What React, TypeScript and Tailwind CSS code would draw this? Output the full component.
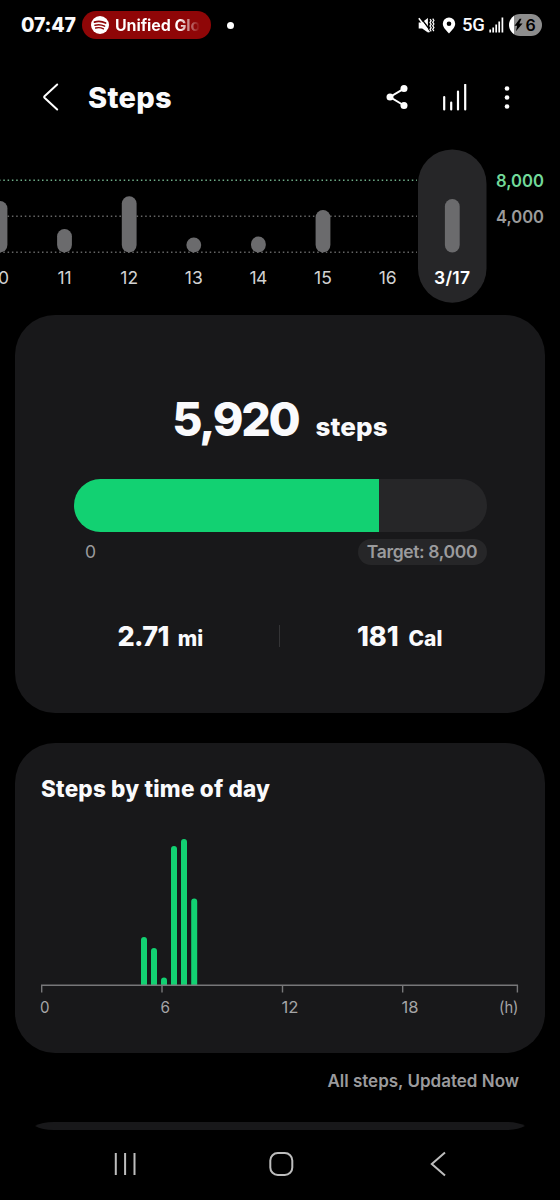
import React from "react";

const week = [
  { label: "10", x: 0, top: 201 },
  { label: "11", x: 64.5, top: 229 },
  { label: "12", x: 129.2, top: 196.3 },
  { label: "13", x: 193.8, top: 237.6 },
  { label: "14", x: 258.4, top: 236.6 },
  { label: "15", x: 323, top: 210 },
  { label: "16", x: 387.7, top: null },
];

const hourly = [
  { x: 144, top: 937 },
  { x: 154, top: 948 },
  { x: 164, top: 977.5 },
  { x: 174, top: 846 },
  { x: 184, top: 839 },
  { x: 194.2, top: 898.5 },
];

const ticks = [41.7, 162, 282.5, 402.7, 517.4];

const hourLabels = [
  { x: 40, label: "0", w: 9.5 },
  { x: 160.4, label: "6", w: 9.5 },
  { x: 281.4, label: "12", w: 17 },
  { x: 401.5, label: "18", w: 17 },
  { x: 499, label: "(h)", w: 19.5 },
];

function StatusBar() {
  return (
    <div className="flex h-[50px] shrink-0 items-center pl-[21px] pr-[18px]">
      <span className="w-[61px] pt-[2px] text-[19.5px] font-extrabold leading-none tracking-[-0.2px]">07:47</span>
      <div className="flex h-[28px] w-[129px] items-center overflow-hidden rounded-full bg-[#8f0607] pl-[9px]">
        <svg width="18" height="18" viewBox="0 0 18 18" className="shrink-0">
          <circle cx="9" cy="9" r="9" fill="#fff" />
          <g fill="none" stroke="#8f0607" strokeLinecap="round">
            <path d="M3.4 6.1c3.7-1.2 7.8-.8 11.2 1" strokeWidth="1.7" />
            <path d="M4 9.2c3.2-.9 6.6-.6 9.6 1" strokeWidth="1.5" />
            <path d="M4.6 12c2.7-.7 5.5-.4 7.9.9" strokeWidth="1.3" />
          </g>
        </svg>
        <span className="ml-[6px] w-[85px] overflow-hidden whitespace-nowrap bg-linear-to-r from-white from-75% to-transparent bg-clip-text text-[16px] font-bold leading-[22px] tracking-[-0.1px] text-transparent">
          Unified Glo
        </span>
      </div>
      <span className="ml-[16px] size-[7px] rounded-full bg-white" />
      <div className="ml-auto flex items-center">
        <svg width="17" height="17" viewBox="0 0 17 17" className="mr-[7px]">
          <path d="M.7 5.5h3.2L9.9 1v14.5L4.2 11.5H.7z" fill="#fff" />
          <path d="M2.5 .6 12 13" stroke="#000" strokeWidth="1.4" />
          <path d="M.8 1.2 11.4 15.2" stroke="#fff" strokeWidth="1.6" />
          <path d="m12 2.2 1.2 1.5-1.2 1.8 1.2 1.7L12 9l1.2 1.7-1.2 1.7 1.2 2M14.7 1.7l1.2 1.8-1.2 1.7 1.2 1.8-1.2 1.8 1.2 1.8-1.2 1.7 1.2 1.8" fill="none" stroke="#fff" strokeWidth="1.2" />
        </svg>
        <svg width="14" height="17" viewBox="0 0 14 17" className="mr-[6px]">
          <path fillRule="evenodd" d="M7 .5a6.2 6.2 0 0 0-6.2 6.2C.8 10.5 4 12.7 7 16.5c3-3.8 6.2-6 6.2-9.8A6.2 6.2 0 0 0 7 .5Zm0 3.9a2.3 2.3 0 1 1 0 4.6 2.3 2.3 0 0 1 0-4.6Z" fill="#fff" />
        </svg>
        <span className="w-[27px] whitespace-nowrap font-['Roboto'] text-[18.5px] font-medium leading-none tracking-[-0.2px]">5G</span>
        <svg width="15" height="16" viewBox="0 0 15 16" className="mr-[5px]">
          <path d="M1.2 15.5v-3M4.2 15.5v-5M7.2 15.5V7.5M10.2 15.5V4.5M13.4 15.5V.5" stroke="#fff" strokeWidth="1.7" />
        </svg>
        <div className="flex h-[22px] w-[33px] items-center overflow-hidden rounded-full bg-[linear-gradient(90deg,#fff_5px,#8d8d8d_5px)] text-black">
          <svg width="9" height="14" viewBox="0 0 9 14" className="ml-[4.5px]">
            <path d="M5.7.7.5 7.7h2.7L1.9 13.2 8.6 5.6H5.3L7.5.7z" fill="#000" />
          </svg>
          <span className="ml-[3px] text-[16px] font-semibold leading-none">6</span>
        </div>
      </div>
    </div>
  );
}

function Header() {
  return (
    <header className="flex h-[96px] shrink-0 items-center pl-[42px] pr-[50px]">
      <svg width="18" height="28" viewBox="0 0 18 28" className="mb-[2px]">
        <path d="M15.2 1.5 2.5 13.2q-.8.8 0 1.6L15.2 26.5" fill="none" stroke="#fff" strokeWidth="2" strokeLinecap="round" />
      </svg>
      <h1 className="mb-[1px] ml-[28px] text-[29px] font-extrabold leading-none tracking-[0.3px]">Steps</h1>
      <svg width="22" height="26" viewBox="0 0 22 26" className="mb-[2px] ml-auto">
        <path d="M18 4.6 4 13l14 8.5" fill="none" stroke="#fff" strokeWidth="2" />
        <circle cx="18" cy="4.5" r="3.5" fill="#fff" />
        <circle cx="4" cy="13" r="3.5" fill="#fff" />
        <circle cx="18" cy="21.5" r="3.5" fill="#fff" />
      </svg>
      <svg width="26" height="28" viewBox="0 0 26 28" className="ml-[34px]">
        <path d="M2.2 13v12.5M9.2 18.5v7M16 7.5v18M23.2.8v24.7" stroke="#fff" strokeWidth="2.2" strokeLinecap="round" />
      </svg>
      <svg width="6" height="26" viewBox="0 0 6 26" className="ml-[36px]">
        <circle cx="3" cy="3.5" r="2.3" fill="#fff" />
        <circle cx="3" cy="12.5" r="2.3" fill="#fff" />
        <circle cx="3" cy="21.5" r="2.3" fill="#fff" />
      </svg>
    </header>
  );
}

function WeekChart() {
  return (
    <svg width="560" height="169" viewBox="0 146 560 169" className="block shrink-0">
      <g strokeWidth="1.5" strokeDasharray="1.5 2.8" fill="none">
        <path d="M-1 180.2H417" stroke="#6fae89" />
        <path d="M-1 216.2H417" stroke="#656565" />
        <path d="M-1 252.2H417" stroke="#656565" />
      </g>
      {week.map((d) => (
        <g key={d.label}>
          {d.top !== null && <rect x={d.x - 7.4} y={d.top} width="14.8" height={252.4 - d.top} rx="7.3" fill="#6b6b6d" />}
          <text x={d.x} y="284.3" textAnchor="middle" fontSize="17.5" fill="#d2d2d2" textLength={d.label === "11" ? 14 : 18}>{d.label}</text>
        </g>
      ))}
      <rect x="418" y="149.5" width="68.5" height="153.2" rx="34.2" fill="#262628" />
      <rect x="444.9" y="199" width="14.8" height="53.4" rx="7.4" fill="#6b6b6d" />
      <text x="452" y="284.3" textAnchor="middle" fontSize="17.5" fontWeight="600" fill="#fff" textLength="36">3/17</text>
      <text x="496" y="186.7" fontSize="17.5" fontWeight="600" fill="#72d99a" textLength="48" lengthAdjust="spacingAndGlyphs">8,000</text>
      <text x="496" y="222.7" fontSize="17.5" fontWeight="600" fill="#9b9b9b" textLength="48" lengthAdjust="spacingAndGlyphs">4,000</text>
    </svg>
  );
}

function SummaryCard() {
  return (
    <section className="mx-[15px] flex h-[398px] shrink-0 flex-col rounded-[40px] bg-[#18181a] px-[58.5px]">
      <div className="mt-[80px] flex h-[48px] items-baseline justify-center whitespace-nowrap leading-[48px]">
        <span className="text-[46.5px] font-extrabold tracking-[-2.3px]">5,920</span>
        <span className="ml-[17px] text-[26px] font-extrabold tracking-[0.1px]">steps</span>
      </div>
      <div className="mt-[35.5px] h-[53px] overflow-hidden rounded-full bg-[#262628]">
        <div className="h-full w-[74%] bg-[#12d172]" />
      </div>
      <div className="mt-[7.5px] flex h-[26px] items-center justify-between pl-[11.5px] text-[#9b9b9d]">
        <span className="text-[17.5px]">0</span>
        <span className="flex h-[26px] w-[129px] items-center justify-center whitespace-nowrap rounded-full bg-[#262628] text-[17.5px] font-semibold tracking-[-0.35px]">Target: 8,000</span>
      </div>
      <div className="mt-[54px] flex h-[34px] items-center whitespace-nowrap leading-none">
        <div className="flex w-[205px] items-baseline pl-[44px]">
          <span className="text-[27px] font-extrabold tracking-[-0.6px]">2.71</span>
          <span className="ml-[9px] text-[21px] font-extrabold">mi</span>
        </div>
        <span className="h-[22px] w-px bg-[#343436]" />
        <div className="flex items-baseline pl-[77.5px]">
          <span className="text-[27px] font-extrabold tracking-[-0.1px]">181</span>
          <span className="ml-[10px] text-[21px] font-extrabold">Cal</span>
        </div>
      </div>
    </section>
  );
}

function TimeOfDayCard() {
  return (
    <section className="mx-[15px] mt-[30px] flex h-[310px] shrink-0 flex-col rounded-[40px] bg-[#18181a]">
      <h2 className="ml-[26px] mt-[32px] h-[28px] whitespace-nowrap text-[22.5px] font-extrabold leading-[28px] tracking-[0.2px]">Steps by time of day</h2>
      <svg width="530" height="220" viewBox="15 803 530 220" className="block">
        {hourly.map((b) => (
          <path key={b.x} d={`M${b.x - 3} 985V${b.top + 3}a3 3 0 0 1 6 0V985z`} fill="#12d172" />
        ))}
        <path d="M41 985.3H518" stroke="#777779" strokeWidth="1.4" />
        {ticks.map((x) => (
          <path key={x} d={`M${x} 985V992.5`} stroke="#777779" strokeWidth="1.4" />
        ))}
        {hourLabels.map((h) => (
          <text key={h.label} x={h.x} y="1012.8" fontSize="16" fill="#a5a5a7" textLength={h.w} lengthAdjust="spacingAndGlyphs">{h.label}</text>
        ))}
      </svg>
    </section>
  );
}

function NavBar() {
  return (
    <nav className="flex h-[70px] shrink-0 items-center pb-[2px] pl-[114px] pr-[113px]">
      <svg width="23" height="24" viewBox="0 0 23 24">
        <path d="M1.8 1v22M11.1 1v22M20.5 1v22" stroke="#bdbdbd" strokeWidth="2" />
      </svg>
      <svg width="26" height="26" viewBox="0 0 26 26" className="ml-[131px]">
        <rect x="2.3" y="2" width="22" height="22" rx="7.5" fill="none" stroke="#bdbdbd" strokeWidth="2" />
      </svg>
      <svg width="18" height="26" viewBox="0 0 18 26" className="ml-auto">
        <path d="M16 1.5 2.8 13 16 24.5" fill="none" stroke="#bdbdbd" strokeWidth="2" />
      </svg>
    </nav>
  );
}

export default function App() {
  return (
    <main className="flex h-[1200px] w-[560px] flex-col overflow-hidden bg-black font-['Inter',sans-serif] text-[#fafafc]">
      <StatusBar />
      <Header />
      <WeekChart />
      <SummaryCard />
      <TimeOfDayCard />
      <p className="mt-[17px] h-[22px] shrink-0 pr-[41px] text-right text-[17px] font-semibold leading-[22px] text-[#9b9b9d]">
        All steps, Updated Now
      </p>
      <svg width="560" height="8" viewBox="0 0 560 8" className="mt-[29.5px] mb-[0.5px] block shrink-0">
        <path d="M35 4Q42 0 54 0H506Q518 0 525 4Q518 8 506 8H54Q42 8 35 4Z" fill="#18181a" />
      </svg>
      <NavBar />
    </main>
  );
}
